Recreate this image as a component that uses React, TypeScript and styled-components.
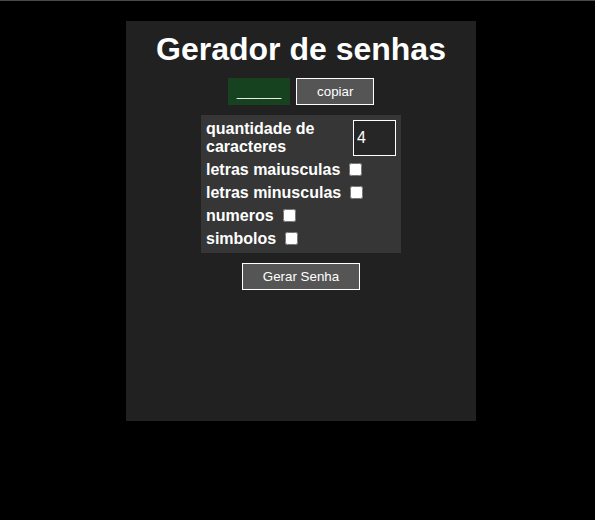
import React, { useState } from "react";
import styled, { createGlobalStyle } from "styled-components";

const GlobalStyle = createGlobalStyle`
  html, body {
    margin: 0;
    padding: 0;
    background: #000;
  }
  body {
    border-top: 1px solid #4a4a4a;
    font-family: "Liberation Sans", Arial, sans-serif;
    color: #fff;
  }
`;

const Page = styled.div`
  min-height: 519px;
  padding-top: 20px;
  padding-left: 126px;
  box-sizing: border-box;
`;

const Card = styled.main`
  width: 350px;
  height: 400px;
  background: #212121;
  display: flex;
  flex-direction: column;
  align-items: center;
  box-sizing: border-box;
  padding-top: 10px;
`;

const Title = styled.h1`
  margin: 0;
  font-family: "Liberation Sans", Arial, sans-serif;
  font-weight: 700;
  font-size: 32px;
  line-height: 37px;
  color: #fff;
`;

const OutputRow = styled.div`
  display: flex;
  gap: 6px;
  margin-top: 10px;
`;

const PasswordBox = styled.div`
  height: 27px;
  padding: 0 9px;
  background: #17421f;
  color: #fff;
  font-size: 13.33px;
  line-height: 27px;
  box-sizing: border-box;
  display: flex;
  align-items: center;
`;

const Button = styled.button`
  height: 27px;
  width: ${(p: { $w: number }) => p.$w}px;
  background: #555;
  color: #fff;
  border: 1px solid #fff;
  font-family: "Liberation Sans", Arial, sans-serif;
  font-size: 13.33px;
  padding: 0;
  box-sizing: border-box;
  cursor: pointer;
`;

const Panel = styled.section`
  width: 200px;
  margin-top: 10px;
  background: #363636;
  padding: 5px;
  box-sizing: border-box;
  display: flex;
  flex-direction: column;
  gap: 4px;
`;

const Row = styled.div`
  display: flex;
  align-items: center;
  gap: ${(p: { $gap?: number }) => (p.$gap ?? 5)}px;
`;

const Label = styled.label`
  font-family: "Liberation Sans", Arial, sans-serif;
  font-weight: 700;
  font-size: 16px;
  line-height: 18px;
  color: #fff;
`;

const WideLabel = styled(Label)`
  flex: 1;
`;

const NumberInput = styled.input`
  width: 43px;
  height: 36px;
  box-sizing: border-box;
  border: 1px solid #fff;
  background: #262626;
  color: #fff;
  font-family: "Liberation Sans", Arial, sans-serif;
  font-size: 16px;
  padding: 0 3px;
  margin: 0 0 0 1px;
  outline: none;
  -moz-appearance: textfield;
  &::-webkit-outer-spin-button,
  &::-webkit-inner-spin-button {
    -webkit-appearance: none;
    margin: 0;
  }
`;

const Check = styled.input`
  width: 13px;
  height: 13px;
  margin: 3px 3px 3px 4px;
`;

const ActionButton = styled(Button)`
  margin-top: 10px;
`;

const options = [
  { id: "maiusculas", label: "letras maiusculas" },
  { id: "minusculas", label: "letras minusculas" },
  { id: "numeros", label: "numeros" },
  { id: "simbolos", label: "simbolos" },
];

export default function App() {
  const [qty, setQty] = useState("4");
  const [checks, setChecks] = useState<Record<string, boolean>>({});
  return (
    <>
      <GlobalStyle />
      <Page>
        <Card>
          <Title>Gerador de senhas</Title>
          <OutputRow>
            <PasswordBox>______</PasswordBox>
            <Button $w={78}>copiar</Button>
          </OutputRow>
          <Panel>
            <Row $gap={8}>
              <WideLabel htmlFor="qtd">quantidade de caracteres</WideLabel>
              <NumberInput
                id="qtd"
                type="number"
                value={qty}
                onChange={(e) => setQty(e.target.value)}
              />
            </Row>
            {options.map((o) => (
              <Row key={o.id}>
                <Label htmlFor={o.id}>{o.label}</Label>
                <Check
                  id={o.id}
                  type="checkbox"
                  checked={!!checks[o.id]}
                  onChange={(e) =>
                    setChecks({ ...checks, [o.id]: e.target.checked })
                  }
                />
              </Row>
            ))}
          </Panel>
          <ActionButton $w={118}>Gerar Senha</ActionButton>
        </Card>
      </Page>
    </>
  );
}
